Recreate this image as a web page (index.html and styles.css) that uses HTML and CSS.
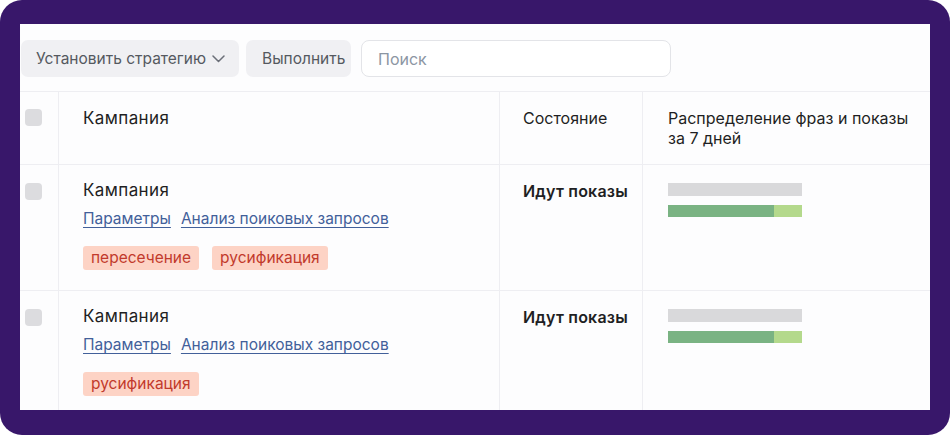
FILE: index.html
```html
<!DOCTYPE html>
<html lang="ru">
<head>
<meta charset="utf-8">
<link rel="stylesheet" href="styles.css">
</head>
<body>
<div class="frame">
  <div class="panel">
    <div class="toolbar">
      <button class="btn btn-drop">Установить стратегию
        <svg class="chev" width="13" height="8" viewBox="0 0 13 8"><path d="M1 1 L6.5 6.5 L12 1" fill="none" stroke="#6b6f78" stroke-width="1.5" stroke-linecap="round" stroke-linejoin="round"/></svg>
      </button>
      <button class="btn btn-run">Выполнить</button>
      <div class="search">Поиск</div>
    </div>
    <div class="table">
      <div class="row head">
        <div class="cell c-check"><span class="checkbox"></span></div>
        <div class="cell c-name"><span class="title">Кампания</span></div>
        <div class="cell c-state">Состояние</div>
        <div class="cell c-dist">Распределение фраз и показы<br>за 7 дней</div>
      </div>
      <div class="row">
        <div class="cell c-check"><span class="checkbox"></span></div>
        <div class="cell c-name">
          <div class="title">Кампания</div>
          <div class="links"><a class="link">Параметры</a><a class="link">Анализ поиковых запросов</a></div>
          <div class="tags"><span class="tag">пересечение</span><span class="tag">русификация</span></div>
        </div>
        <div class="cell c-state"><span class="status">Идут показы</span></div>
        <div class="cell c-dist">
          <div class="bar gray"></div>
          <div class="bar green"><span class="dark" style="width:106px"></span><span class="light"></span></div>
        </div>
      </div>
      <div class="row">
        <div class="cell c-check"><span class="checkbox"></span></div>
        <div class="cell c-name">
          <div class="title">Кампания</div>
          <div class="links"><a class="link">Параметры</a><a class="link">Анализ поиковых запросов</a></div>
          <div class="tags"><span class="tag">русификация</span></div>
        </div>
        <div class="cell c-state"><span class="status">Идут показы</span></div>
        <div class="cell c-dist">
          <div class="bar gray"></div>
          <div class="bar green"><span class="dark" style="width:106px"></span><span class="light"></span></div>
        </div>
      </div>
    </div>
  </div>
</div>
</body>
</html>
```

FILE: styles.css
```css
* { box-sizing: border-box; }
html, body { margin: 0; padding: 0; background: #ffffff; }
body {
  width: 950px;
  height: 435px;
  overflow: hidden;
  font-family: "Inter", "Noto Sans", sans-serif;
  color: #1f1f23;
}
.frame {
  width: 950px;
  height: 435px;
  background: #38176a;
  border-radius: 22px;
  padding: 24px 20px 25px 20px;
}
.panel {
  width: 100%;
  height: 100%;
  background: #fdfdfe;
  overflow: hidden;
}
.toolbar {
  display: flex;
  align-items: flex-start;
  padding: 16px 0 0 1px;
  height: 67px;
}
.btn {
  height: 37px;
  border: none;
  border-radius: 7px;
  background: #f0f0f3;
  color: #55595f;
  font-family: inherit;
  font-size: 15.5px;
  display: flex;
  align-items: center;
}
.btn-drop {
  width: 218px;
  padding: 0 0 0 15px;
  gap: 6px;
}
.btn-run {
  margin-left: 7px;
  width: 105px;
  padding: 0 0 0 16px;
}
.chev { margin-top: 1px; }
.search {
  margin-left: 10px;
  width: 310px;
  height: 37px;
  border: 1px solid #e3e4e8;
  border-radius: 8px;
  background: #fff;
  color: #8c96a3;
  font-size: 16px;
  display: flex;
  align-items: center;
  padding-left: 16px;
}
.table { border-top: 1px solid #eeeef2; }
.row {
  display: grid;
  grid-template-columns: 38px 441px 143px 1fr;
  border-bottom: 1px solid #eeeef2;
  height: 126px;
}
.row.head { height: 73px; }
.cell { border-left: 1px solid #eeeef2; }
.cell.c-check { border-left: none; padding: 18px 0 0 5px; }
.checkbox {
  display: block;
  width: 17px;
  height: 17px;
  border-radius: 4px;
  background: #dcdcdf;
}
.head .cell {
  font-size: 16px;
  line-height: 20px;
  padding-top: 16px;
}
.head .c-check { padding-top: 17px; }
.c-name { padding: 15px 0 0 24px; }
.c-state { padding: 16px 0 0 23px; }
.c-dist { padding: 17px 0 0 25px; }
.head .c-name { padding-left: 24px; }
.head .c-state { padding-left: 23px; }
.head .c-dist { padding-left: 25px; }
.title { font-size: 17px; line-height: 21px; letter-spacing: 0.4px; }
.links {
  margin-top: 8px;
  line-height: 20px;
  display: flex;
  gap: 10px;
}
.link {
  color: #42609a;
  text-decoration: underline;
  text-underline-offset: 3px;
  text-decoration-thickness: 1px;
  font-size: 15.5px;
}
.tags {
  margin-top: 17px;
  display: flex;
  gap: 13px;
}
.tag {
  height: 24px;
  line-height: 24px;
  padding: 0 8px;
  border-radius: 3px;
  background: #fdd3c5;
  color: #c23a2c;
  font-size: 15.5px;
}
.status {
  font-size: 16px;
  line-height: 20px;
  font-weight: 600;
  letter-spacing: 0.2px;
  display: block;
}
.bar { width: 134px; }
.bar.gray { height: 13px; background: #d9d9db; margin-top: 1px; }
.bar.green { height: 12px; margin-top: 9px; display: flex; }
.bar.green .dark { background: #7ab383; height: 100%; }
.bar.green .light { background: #b4d98c; height: 100%; flex: 1; }
```
